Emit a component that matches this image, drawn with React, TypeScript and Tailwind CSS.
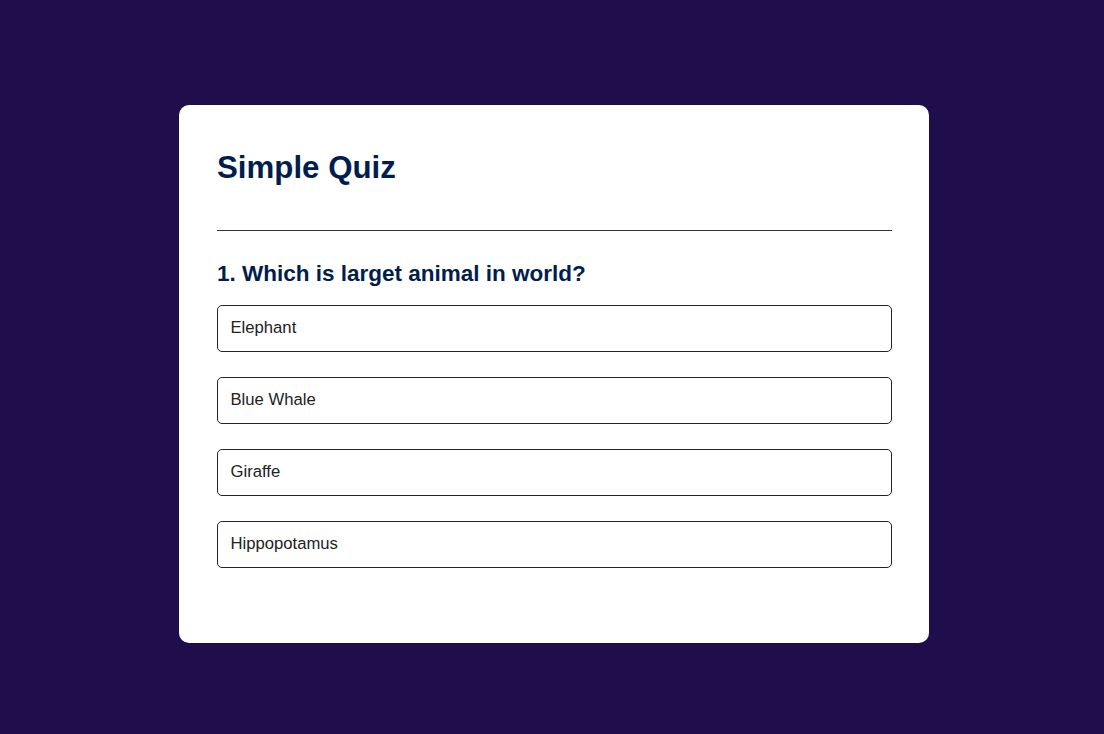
import React from "react";

const answers = ["Elephant", "Blue Whale", "Giraffe", "Hippopotamus"];

const App = () => {
  return (
    <div
      className="min-h-screen w-full bg-[#200d4b] pt-[105px] pl-[4px]"
      style={{ fontFamily: '"Liberation Sans", Arial, sans-serif' }}
    >
      <div className="mx-auto w-[750px] rounded-[10px] bg-white pl-[38px] pr-[37px] pt-[45px] pb-[75.5px]">
        <h1 className="border-b border-[#333] pb-[44px] text-[31.25px] leading-[36px] font-bold text-[#001e4d]">
          Simple Quiz
        </h1>
        <div className="pt-[30px]">
          <h2 className="text-[22.5px] leading-[26px] font-bold text-[#001e4d]">
            1. Which is larget animal in world?
          </h2>
          <div className="mt-[18px] flex flex-col gap-[25.5px]">
            {answers.map((a) => (
              <button
                key={a}
                className="h-[46.5px] w-full rounded-[5px] border border-[#222] bg-white px-[12.5px] pb-[2px] text-left text-[16.67px] text-[#222]"
              >
                {a}
              </button>
            ))}
          </div>
        </div>
      </div>
    </div>
  );
};

export default App;
